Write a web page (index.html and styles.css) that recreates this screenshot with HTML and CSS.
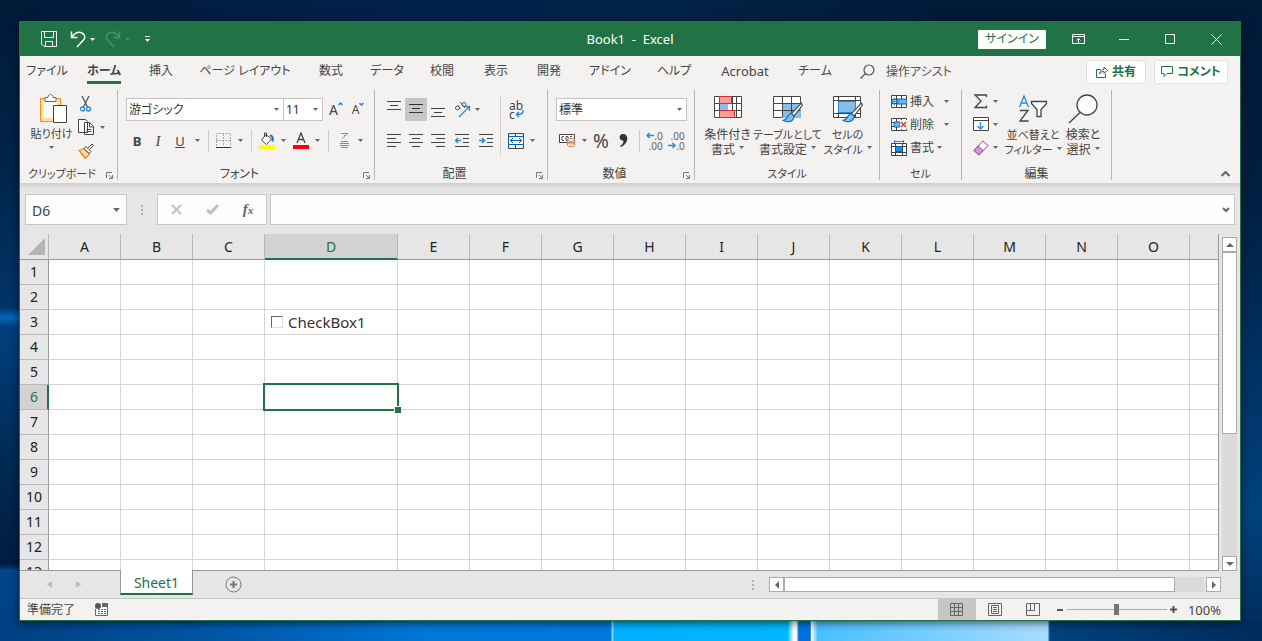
FILE: index.html
```html
<!DOCTYPE html>
<html lang="ja">
<head>
<meta charset="utf-8">
<title>Book1 - Excel</title>
<link rel="stylesheet" href="styles.css">
</head>
<body>
<svg class="defs" width="0" height="0" aria-hidden="true">
  <symbol id="caret" viewBox="0 0 5 3"><path d="M0 0h5L2.5 3z" fill="currentColor"/></symbol>
  <symbol id="launch" viewBox="0 0 7 7"><path d="M.5 6V.5H6M3 3l3 3M6.500 3v3.500H3" fill="none" stroke="currentColor"/></symbol>
  <symbol id="brush" viewBox="0 0 20 20"><path d="M18.500 1L9 11l2.500 2.500L19.500 3z" fill="#fff" stroke="#444"/><path d="M9 11c-4 0-3 6-8 6.500 4 2.500 10 1.500 10.500-4z" fill="#83beec" stroke="#0063b1"/></symbol>
</svg>
<main class="window">
  <header class="titlebar">
    <div class="quick">
      <button class="bare save" aria-label="保存"><svg width="16" height="16" fill="none" stroke="#fff"><path d="M.5.5h15v15H3L.5 13zM3.500.5v6h9v-6M4.500 15v-4.500h7V15"/></svg></button>
      <button class="bare" aria-label="元に戻す"><svg width="16" height="17" fill="none" stroke="#fff" stroke-width="1.500"><path d="M1.500.500v6h6M2 6C5 2 9 .5 12 2s4 5 1 7.500L7 16"/></svg></button>
      <svg class="caret" width="5" height="3"><use href="#caret"/></svg>
      <button class="bare redo" aria-label="やり直し"><svg width="16" height="17" fill="none" stroke="#4d9069" stroke-width="1.500"><path d="M14.500.500v6h-6M14 6C11 2 7 .5 4 2S0 7 3 9.500L9 16"/></svg></button>
      <svg class="caret dim" width="5" height="3"><use href="#caret"/></svg>
      <button class="bare more" aria-label="カスタマイズ"><svg width="5" height="6" fill="#fff"><path d="M0 0h5v1H0zM0 3h5L2.500 6z"/></svg></button>
    </div>
    <h1 class="title">Book1&nbsp; -&nbsp; Excel</h1>
    <div class="controls">
      <button class="signin">サインイン</button>
      <button class="bare wc" aria-label="リボンの表示"><svg width="13" height="10" fill="none" stroke="#fff"><path d="M.5.5h12v9H.5zM.5 2.500h12M6.500 9V4.500M4.500 6.500l2-2 2 2"/></svg></button>
      <button class="bare wc" aria-label="最小化"><svg width="10" height="10" stroke="#fff"><path d="M0 5.500h10"/></svg></button>
      <button class="bare wc" aria-label="最大化"><svg width="10" height="10" fill="none" stroke="#fff"><path d="M.5.5h9v9h-9z"/></svg></button>
      <button class="bare wc" aria-label="閉じる"><svg width="11" height="11" stroke="#fff"><path d="M.5.5l10 10M10.500.5l-10 10"/></svg></button>
    </div>
  </header>

  <div class="tabrow">
    <nav class="tabs">
      <a href="#">ファイル</a><a href="#" class="current"><span>ホーム</span></a><a href="#">挿入</a><a href="#">ページ レイアウト</a><a href="#">数式</a><a href="#">データ</a><a href="#">校閲</a><a href="#">表示</a><a href="#">開発</a><a href="#">アドイン</a><a href="#">ヘルプ</a><a href="#" class="latin">Acrobat</a><a href="#">チーム</a>
    </nav>
    <button class="bare assist"><svg width="15" height="15" fill="none" stroke="#555" stroke-width="1.200"><circle cx="9" cy="6" r="5"/><path d="M5.500 9.500L.5 14.500"/></svg>操作アシスト</button>
    <button class="pill share"><svg width="12" height="12" fill="none" stroke="#217346"><path d="M5 3.500H.5v8h9V8M3.500 8C4 5 6 3.500 8 3.500V1l3.500 3.500L8 7.500V5.500C6 5.500 4.500 6 3.500 8z"/></svg>共有</button>
    <button class="pill comment"><svg width="12" height="12" fill="none" stroke="#217346"><path d="M.5.5h11v7H6L3 10.500v-3H.5z"/></svg>コメント</button>
  </div>

  <section class="ribbon">
    <div class="group">
      <div class="body clip">
        <button class="bare big">
          <svg width="30" height="31" fill="none"><path d="M2.500 5.500h20v23h-20z" fill="#fbdf9b" stroke="#f28c28"/><path d="M5.500 9h14v16h-14z" fill="#fafafa"/><path d="M7 8.500V4.500h3c0-4 5-4 5 0h3v4z" fill="#fff" stroke="#666"/><path d="M15.500 12.500h13v17h-13z" fill="#fff" stroke="#444"/></svg>
          <span class="kana">貼り付け</span><svg class="caret" width="5" height="3"><use href="#caret"/></svg>
        </button>
        <div class="stack">
          <button class="bare" aria-label="切り取り"><svg width="16" height="17" fill="none"><path d="M4 0l5.500 11M11 0L5.500 11" stroke="#555" stroke-width="1.300"/><circle cx="4.500" cy="13" r="2" stroke="#2b88d8" stroke-width="1.300"/><circle cx="10.500" cy="13" r="2" stroke="#2b88d8" stroke-width="1.300"/></svg></button>
          <button class="bare" aria-label="コピー"><svg width="16" height="17" fill="#fff" stroke="#444"><path d="M.5.5h7l2 2v11h-9zM6.500 3.500h5l4 4v8h-9z"/><path d="M11.500 4v4h4M8.500 10.500h5M8.500 12.500h5" fill="none"/></svg><svg class="caret" width="5" height="3"><use href="#caret"/></svg></button>
          <button class="bare" aria-label="書式のコピー"><svg width="16" height="17" fill="none"><path d="M1 8.500l5-2 5.500 5.500-4 4.500z" fill="#fbdf9b" stroke="#f28c28" stroke-width="1.300"/><path d="M6 6.500l2-2 5 5-2 2z" fill="#fff" stroke="#444"/><path d="M10 6l4-4 1.500 1.500-4 4" fill="#fff" stroke="#444"/><path d="M3 11l4.500 5" stroke="#f28c28" stroke-width="1.500"/></svg></button>
        </div>
      </div>
      <footer class="caption kana">クリップボード<svg class="launch" width="7" height="7"><use href="#launch"/></svg></footer>
    </div>

    <div class="group">
      <div class="body rows">
        <div class="line">
          <div class="combo face"><select aria-label="フォント"><option>游ゴシック</option></select><svg class="caret" width="5" height="3"><use href="#caret"/></svg></div>
          <div class="combo size"><select aria-label="サイズ"><option>11</option></select><svg class="caret" width="5" height="3"><use href="#caret"/></svg></div>
          <button class="bare grow" aria-label="拡大">A<svg width="5" height="4" fill="none" stroke="#2b88d8" stroke-width="1.500"><path d="M.5 3l2-2 2 2"/></svg></button>
          <button class="bare grow" aria-label="縮小"><small>A</small><svg width="5" height="4" fill="none" stroke="#2b88d8" stroke-width="1.500"><path d="M.5 1l2 2 2-2"/></svg></button>
        </div>
        <div class="fontgrid">
          <button class="bare"><b>B</b></button><button class="bare"><i>I</i></button><button class="bare"><u>U</u></button><svg class="caret" width="5" height="3"><use href="#caret"/></svg><span class="sep"></span>
          <button class="bare" aria-label="罫線"><svg width="15" height="16" fill="none"><path d="M.5 13V.5h14V13M7.500 1v12M0 7.500h15" stroke="#aaa" stroke-dasharray="2 1"/><path d="M0 14.500h15" stroke="#333"/></svg></button><svg class="caret" width="5" height="3"><use href="#caret"/></svg><span class="sep"></span>
          <button class="bare" aria-label="塗りつぶし"><svg width="16" height="17" fill="none"><path d="M7 2.500L2.500 8l5 4.500L12.500 7zM5.500 5V1h2v4" fill="#fff" stroke="#444"/><path d="M11 3.500c2 0 3.500 2 2.500 6" stroke="#1e73b8" stroke-width="2"/><path d="M0 13h16v4H0z" fill="#ff0"/></svg></button><svg class="caret" width="5" height="3"><use href="#caret"/></svg>
          <button class="bare" aria-label="フォントの色"><svg width="16" height="17" fill="none"><path d="M4 11L8 1l4 10M5.500 7.500h5" stroke="#444" stroke-width="1.300"/><path d="M0 13h16v4H0z" fill="red"/></svg></button><svg class="caret" width="5" height="3"><use href="#caret"/></svg><span class="sep"></span>
          <button class="bare" aria-label="ふりがな"><svg width="9" height="17" fill="none" stroke="#888"><path d="M1 1.500h6.500L5.500 4M4.500 3c0 2-1 3-2.500 4M1 9.500h7M0 11.500h9M0 13.500h9M1 15.500h7"/></svg></button><svg class="caret" width="5" height="3"><use href="#caret"/></svg>
        </div>
      </div>
      <footer class="caption">フォント<svg class="launch" width="7" height="7"><use href="#launch"/></svg></footer>
    </div>

    <div class="group">
      <div class="body align">
        <div class="rows">
          <div class="line">
            <button class="bare sq" aria-label="上揃え"><svg width="14" height="17" stroke="#444"><path d="M0 .5h14M3 4.500h8M0 8.500h14"/></svg></button>
            <button class="bare sq on" aria-label="中央揃え"><svg width="14" height="17" stroke="#333"><path d="M0 3.500h14M3 7.500h8M0 11.500h14"/></svg></button>
            <button class="bare sq" aria-label="下揃え"><svg width="14" height="17" stroke="#444"><path d="M0 7.500h14M3 11.500h8M0 15.500h14"/></svg></button>
            <button class="bare sq wide" aria-label="方向"><svg width="17" height="17" fill="none"><circle cx="3.500" cy="7" r="2" stroke="#555"/><path d="M3.500 4l3 4M6 1l5 6" stroke="#555"/><circle cx="10" cy="3.500" r="2" stroke="#555"/><path d="M5 16L15.500 5.500M11 5.500h4.500V10" stroke="#2b88d8" stroke-width="1.300"/></svg></button>
            <svg class="caret" width="5" height="3"><use href="#caret"/></svg>
          </div>
          <div class="line">
            <button class="bare sq" aria-label="左揃え"><svg width="14" height="13" stroke="#444"><path d="M0 .5h14M0 4.500h9M0 8.500h14M0 12.500h9"/></svg></button>
            <button class="bare sq" aria-label="中央"><svg width="14" height="13" stroke="#444"><path d="M0 .5h14M3 4.500h8M0 8.500h14M3 12.500h8"/></svg></button>
            <button class="bare sq" aria-label="右揃え"><svg width="14" height="13" stroke="#444"><path d="M0 .5h14M5 4.500h9M0 8.500h14M5 12.500h9"/></svg></button>
            <button class="bare sq wide" aria-label="インデント減"><svg width="14" height="13" fill="none" stroke="#444"><path d="M0 .5h14M8 4.500h6M8 8.500h6M0 12.500h14"/><path d="M6 6.500H1M3 4L.5 6.500 3 9" stroke="#2b88d8" stroke-width="1.500"/></svg></button>
            <button class="bare sq" aria-label="インデント増"><svg width="14" height="13" fill="none" stroke="#444"><path d="M0 .5h14M8 4.500h6M8 8.500h6M0 12.500h14"/><path d="M0 6.500h5M3 4l2.500 2.500L3 9" stroke="#2b88d8" stroke-width="1.500"/></svg></button>
          </div>
        </div>
        <span class="sep tall"></span>
        <div class="rows">
          <div class="line">
            <button class="bare wrap" aria-label="折り返し"><span>ab</span><span>c<svg width="9" height="8" fill="none" stroke="#2b88d8" stroke-width="1.500"><path d="M8 0c.5 3-1 4.500-6.500 4.500M4 2L1.500 4.500 4 7"/></svg></span></button>
          </div>
          <div class="line">
            <button class="bare sq" aria-label="結合"><svg width="16" height="16" fill="none"><path d="M.5.5h15v15H.5zM7.500 0v3M7.500 12v4" stroke="#444"/><path d="M.5 3.500h15v8H.5z" fill="#fff" stroke="#0063b1"/><path d="M2.500 7.500h11M5 5L2.500 7.500 5 10M11 5l2.500 2.500L11 10" stroke="#0063b1"/></svg></button>
            <svg class="caret gap" width="5" height="3"><use href="#caret"/></svg>
          </div>
        </div>
      </div>
      <footer class="caption">配置<svg class="launch" width="7" height="7"><use href="#launch"/></svg></footer>
    </div>

    <div class="group">
      <div class="body rows">
        <div class="line"><div class="combo num"><select aria-label="表示形式"><option>標準</option></select><svg class="caret" width="5" height="3"><use href="#caret"/></svg></div></div>
        <div class="numgrid">
          <button class="bare" aria-label="通貨"><svg width="17" height="15" fill="none"><path d="M.5 1.500h15v8H.5z" fill="#fff" stroke="#444"/><path d="M5 3.500H3v4h2M7 3.500h2v4H7zM11 3.500h2" stroke="#555"/><path d="M8.500 7c0-2 7-2 7 0v5c0 2-7 2-7 0zM8.500 7c0 2 7 2 7 0M8.500 9.500c0 2 7 2 7 0" fill="#fff" stroke="#e8792b"/></svg></button><svg class="caret" width="5" height="3"><use href="#caret"/></svg>
          <button class="bare pct">%</button><button class="bare" aria-label="桁区切り"><svg width="9" height="15"><path d="M4 1c6 0 6 9-2 13l-1-1c3-2 4-4 3-5.500C-.5 7.500-.5 1 4 1z" fill="#333"/></svg></button><span class="sep"></span>
          <button class="bare dec" aria-label="小数点以下を増やす"><span><svg width="8" height="7" fill="none" stroke="#2b88d8" stroke-width="1.500"><path d="M8 3.500H1M3.500 1L1 3.500 3.500 6"/></svg>.0</span><span>.00</span></button>
          <button class="bare dec" aria-label="小数点以下を減らす"><span>.00</span><span><svg width="8" height="7" fill="none" stroke="#2b88d8" stroke-width="1.500"><path d="M0 3.500h7M4.500 1L7 3.500 4.500 6"/></svg>.0</span></button>
        </div>
      </div>
      <footer class="caption">数値<svg class="launch" width="7" height="7"><use href="#launch"/></svg></footer>
    </div>

    <div class="group">
      <div class="body styles">
        <button class="bare big"><svg width="30" height="29" fill="#fff" stroke="#444"><path d="M1.500 2.500h27v21h-27zM1.500 9.500h27M1.500 16.500h27M6.500 2v21M19.500 2v21M23.500 2v21"/><path d="M6.500 2.500h12v7h-12zM6.500 16.500h15v7h-15z" fill="#ff9a9a" stroke="#d92c2c"/><path d="M7 10h8v6H7z" fill="#83beec" stroke="none"/></svg><span>条件付き</span><span>書式<svg class="caret" width="5" height="3"><use href="#caret"/></svg></span></button>
        <button class="bare big"><svg width="32" height="29" fill="#fff" stroke="#444"><path d="M1.500 2.500h27v21h-27z"/><path d="M10 9h19v15H10z" fill="#83beec" stroke="none"/><path d="M1.500 9.500h27M1.500 16.500h27M10.500 2v21M19.500 2v21" fill="none"/><svg x="10" y="8" width="21" height="21" viewBox="0 0 20 20"><use href="#brush"/></svg></svg><span class="kana">テーブルとして</span><span>書式設定<svg class="caret" width="5" height="3"><use href="#caret"/></svg></span></button>
        <button class="bare big"><svg width="32" height="29" fill="#fff" stroke="#444"><path d="M1.500 2.500h27v21h-27zM1.500 6.500h27M1.500 19.500h27M6.500 2v21M23.500 2v21"/><path d="M6.500 7.500h17v11h-17z" fill="#83beec" stroke="#2b88d8"/><svg x="10" y="8" width="21" height="21" viewBox="0 0 20 20"><use href="#brush"/></svg></svg><span class="kana">セルの</span><span class="kana">スタイル<svg class="caret" width="5" height="3"><use href="#caret"/></svg></span></button>
      </div>
      <footer class="caption plain kana">スタイル</footer>
    </div>

    <div class="group">
      <div class="body cells">
        <button class="bare"><svg width="16" height="16" fill="#fff" stroke="#444"><path d="M.5 1.500h15v12H.5zM.5 5.500h15M.5 9.500h15M5.500 1v12M10.500 1v12"/><path d="M6 5h10v5H6z" fill="#6db3f2" stroke="#0063b1"/><path d="M8 7.500H1M4 4L.5 7.500 4 11" fill="none" stroke="#2b88d8" stroke-width="1.500"/></svg>挿入<svg class="caret" width="5" height="3"><use href="#caret"/></svg></button>
        <button class="bare"><svg width="16" height="16" fill="#fff" stroke="#444"><path d="M.5 1.500h15v12H.5zM.5 5.500h15M.5 9.500h15M5.500 1v12M10.500 1v12"/><path d="M3 5h6v5H3z" fill="#6db3f2" stroke="#0063b1"/><path d="M9 3h7v9H9z" fill="#f3f2f1" stroke="none"/><path d="M10 5l5 5M15 5l-5 5" stroke="#e03c31" stroke-width="1.500"/></svg>削除<svg class="caret" width="5" height="3"><use href="#caret"/></svg></button>
        <button class="bare fmt"><svg width="16" height="16" fill="#fff" stroke="#444"><path d="M.5 3.500h15v12H.5zM.5 6.500h15M.5 12.500h15M4.500 3v12M11.500 3v12"/><path d="M4.500 6.500h7v5h-7z" fill="#2b88d8" stroke="#0063b1"/><path d="M3.500 0v3M12.500 0v3M4 1.500h8" stroke="#2b88d8"/></svg>書式<svg class="caret" width="5" height="3"><use href="#caret"/></svg></button>
      </div>
      <footer class="caption plain kana">セル</footer>
    </div>

    <div class="group">
      <div class="body edit">
        <div class="stack">
          <button class="bare" aria-label="合計"><svg width="16" height="15" fill="none" stroke="#444" stroke-width="1.300"><path d="M13.500 3V1H2l6 6-6 6.500h11.500v-2"/></svg><svg class="caret" width="5" height="3"><use href="#caret"/></svg></button>
          <button class="bare" aria-label="フィル"><svg width="16" height="15" fill="#fff" stroke="#444"><path d="M.5.5h15v13H.5zM.5 3.500h15"/><path d="M7.500 5v7M4.500 9l3 3 3-3" fill="none" stroke="#2b88d8" stroke-width="1.300"/></svg><svg class="caret" width="5" height="3"><use href="#caret"/></svg></button>
          <button class="bare" aria-label="クリア"><svg width="16" height="16" stroke="#a03fa5"><path d="M1 10.500L10 1l5 4.500-9 9.500z" fill="#fff"/><path d="M1 10.500L5 6l5 4.500L6 15z" fill="#cf9bd3"/></svg><svg class="caret" width="5" height="3"><use href="#caret"/></svg></button>
        </div>
        <button class="bare big"><svg width="30" height="31" fill="none"><path d="M1.500 14L6 3l4.500 11M3 10h6" stroke="#2b88d8" stroke-width="1.300"/><path d="M2 17.500h8L2 28h8.500" stroke="#444" stroke-width="1.300"/><path d="M13.500 8.500h15v2l-5.500 6v7h-4v-7l-5.500-6z" fill="#fff" stroke="#444" stroke-width="1.300"/></svg><span class="kana">並べ替えと</span><span class="kana">フィルター<svg class="caret" width="5" height="3"><use href="#caret"/></svg></span></button>
        <button class="bare big"><svg width="30" height="31" fill="#fff" stroke="#444" stroke-width="1.300"><circle cx="19" cy="12" r="10"/><path d="M12 19.500L1 30"/></svg><span>検索と</span><span>選択<svg class="caret" width="5" height="3"><use href="#caret"/></svg></span></button>
      </div>
      <footer class="caption plain">編集</footer>
    </div>
    <button class="bare collapse" aria-label="リボンを折りたたむ"><svg width="9" height="6" fill="none" stroke="#666" stroke-width="2"><path d="M.5 5l4-4 4 4"/></svg></button>
  </section>

  <section class="formula">
    <div class="namebox"><input aria-label="名前ボックス" value="D6"><svg class="caret" width="7" height="4"><use href="#caret"/></svg></div>
    <span class="dots"></span>
    <div class="fx">
      <button class="bare" aria-label="キャンセル"><svg width="11" height="11" stroke="#c0c0c0" stroke-width="2"><path d="M1 1l9 9M10 1l-9 9"/></svg></button>
      <button class="bare" aria-label="入力"><svg width="13" height="11" fill="none" stroke="#c0c0c0" stroke-width="3"><path d="M1 6l3.500 3L12 1"/></svg></button>
      <button class="bare fn">f<small>x</small></button>
    </div>
    <div class="entry"><input aria-label="数式バー"><svg width="8" height="6" fill="none" stroke="#666" stroke-width="2"><path d="M1 1l3 3 3-3"/></svg></div>
  </section>

  <section class="sheet">
    <div class="viewport"><table class="cellgrid" id="cells"></table></div>
    <div class="vscroll">
      <button class="bare arrow" aria-label="上へ"><svg width="8" height="4" fill="#666"><path d="M0 4h8L4 0z"/></svg></button>
      <div class="track"><div class="thumb"></div></div>
      <button class="bare arrow" aria-label="下へ"><svg width="8" height="4" fill="#666"><path d="M0 0h8L4 4z"/></svg></button>
    </div>
  </section>

  <section class="sheetbar">
    <div class="nav">
      <button class="bare" aria-label="前"><svg width="5" height="7" fill="#bbb"><path d="M5 0v7L0 3.500z"/></svg></button>
      <button class="bare" aria-label="次"><svg width="5" height="7" fill="#bbb"><path d="M0 0v7l5-3.500z"/></svg></button>
    </div>
    <a href="#" class="sheettab">Sheet1</a>
    <button class="bare add" aria-label="新しいシート"><svg width="17" height="17" fill="none" stroke="#777"><circle cx="8.500" cy="8.500" r="7.500"/><path d="M8.500 5v7M5 8.500h7" stroke-width="2"/></svg></button>
    <span class="dots"></span>
    <div class="hscroll">
      <button class="bare arrow" aria-label="左へ"><svg width="4" height="8" fill="#666"><path d="M4 0v8L0 4z"/></svg></button>
      <div class="track"><div class="thumb"></div></div>
      <button class="bare arrow" aria-label="右へ"><svg width="4" height="8" fill="#666"><path d="M0 0v8l4-4z"/></svg></button>
    </div>
  </section>

  <footer class="status">
    <span class="ready">準備完了</span>
    <svg width="13" height="13"><path d="M.5 6v6.500h12v-12H7" fill="#fff" stroke="#666"/><path d="M7 0h6v4H7z" fill="#666"/><circle cx="3" cy="3" r="3" fill="#555"/><path d="M3 6.500h8M3 8.500h8M3 10.500h8" stroke="#666" stroke-dasharray="2 1"/></svg>
    <div class="views">
      <button class="bare on" aria-label="標準"><svg width="13" height="13" fill="none" stroke="#666"><path d="M.5.5h12v12H.5zM.5 4.500h12M.5 8.500h12M4.500 0v13M8.500 0v13"/></svg></button>
      <button class="bare" aria-label="ページ レイアウト表示"><svg width="14" height="13" fill="none" stroke="#666"><path d="M.5.5h13v12H.5zM3.500 2.500h7v8h-7zM5 4.500h4M5 6.500h4M5 8.500h4"/></svg></button>
      <button class="bare" aria-label="改ページ"><svg width="14" height="13" fill="none" stroke="#666"><path d="M.5.5h13v12H.5zM.5 7.500h8V.5M4.500.5v7"/></svg></button>
    </div>
    <button class="bare zoom" aria-label="縮小"><svg width="6" height="2" fill="#555"><path d="M0 0h6v2H0z"/></svg></button>
    <input type="range" class="slider" aria-label="ズーム" min="0" max="200" value="100">
    <button class="bare zoom" aria-label="拡大"><svg width="7" height="7" fill="#555"><path d="M0 2.500h7v2H0zM2.500 0h2v7h-2z"/></svg></button>
    <span class="percent">100%</span>
  </footer>
</main>
<script src="sheet.js"></script>
</body>
</html>
```
FILE: sheet.js
```js
const columns = 'ABCDEFGHIJKLMNO'.split('').concat('');
const rowCount = 13;
const table = document.getElementById('cells');

const colgroup = document.createElement('colgroup');
colgroup.innerHTML = '<col class="c-head">' +
  columns.map(c => `<col class="${c === 'D' ? 'c-wide' : 'c-std'}">`).join('');
table.append(colgroup);

const head = table.createTHead().insertRow();
head.innerHTML = '<th class="corner"><svg width="17" height="17" fill="#b4b4b4"><path d="M17 0v17H0z"/></svg></th>' +
  columns.map(c => `<th class="${c === 'D' ? 'picked' : ''}">${c}</th>`).join('');

const body = table.createTBody();
for (let r = 1; r <= rowCount; r++) {
  const row = body.insertRow();
  row.innerHTML = `<th class="${r === 6 ? 'picked' : ''}">${r}</th>` + columns.map(() => '<td></td>').join('');
}
body.rows[2].cells[4].innerHTML = '<label class="check"><input type="checkbox">CheckBox1</label>';
const active = body.rows[5].cells[4];
active.className = 'active';
active.innerHTML = '<div class="cursor"></div>';
```
FILE: styles.css
```css
* { box-sizing: border-box; }
body {
  margin: 0;
  height: 100vh;
  padding: 21px 21px 20px 19px;
  overflow: hidden;
  font: 12px/16px "Noto Sans", "Noto Sans CJK JP", sans-serif;
  font-feature-settings: "palt";
  color: #444;
  background:
    linear-gradient(90deg, #003f80, #0058a8 18%, #0078d8 34%, #0078dc 48.4%, #8df 48.5%, #00b0ff 48.700%, #00b8ff 62.4%, #fff 62.9%, #fff 63.1%, #0070e0 63.3%, #0070e0 64.2%, #fff 64.3%, #48c0ff 64.800%, #a8dcff 83%, #00427e 83.2%, #002b5a) bottom / 100% 22px no-repeat,
    linear-gradient(#001a38, #002448 25%, #003468 48%, #0068b8 49.500%, #004080 51%, #002c58 70%, #001c40 88%, #00468c 89%, #003f80) left / 24px 100% no-repeat,
    linear-gradient(#001a38, #001e40 30%, #003060 55%, #00427e 80%, #002b5a) right / 24px 100% no-repeat,
    linear-gradient(90deg, #001a38, #00214a 32%, #002448 50%, #001a38 75%);
}
svg { display: block; flex: none; }
.defs { position: absolute; }
.window {
  display: flex;
  flex-direction: column;
  height: 100%;
  border: 1px solid #217346;
  background: #e6e6e6;
  box-shadow: 0 2px 8px rgba(0, 0, 0, .6);
}
.bare {
  display: flex;
  align-items: center;
  justify-content: center;
  border: 0;
  padding: 0;
  background: none;
  color: inherit;
  font: inherit;
  font-feature-settings: inherit;
}
.kana { font-size: 11px; }
.caret { color: #666; }
.sep { justify-self: center; width: 1px; height: 22px; background: #d0cecc; }

.titlebar {
  display: grid;
  grid-template-columns: 1fr auto 1fr;
  align-items: center;
  height: 34px;
  flex: none;
  background: #217346;
  color: #fff;
}
.quick { display: flex; align-items: center; padding-left: 21px; }
.quick .caret { color: #fff; margin-left: 4px; }
.quick .caret.dim { color: #4d9069; }
.save { margin-right: 13px; }
.redo { margin-left: 10px; }
.more { margin-left: 15px; }
.title { margin: 0; font-size: 13px; font-weight: 400; }
.controls { display: flex; align-items: center; justify-content: flex-end; padding-right: 1px; }
.wc { width: 46px; height: 34px; }
.signin { width: 68px; height: 19px; padding: 0; margin-right: 9px; border: 0; border-radius: 1px; background: #fff; color: #217346; font: inherit; font-feature-settings: inherit; }

.tabrow { display: flex; align-items: center; height: 31px; flex: none; padding-right: 12px; background: #f3f2f1; }
.tabs { display: grid; align-self: flex-start; padding-top: 5px; grid-template-columns: 54px 60px 54px 114px 58px 54px 56px 52px 54px 68px 60px 82px 58px; }
.tabs a { color: #444; text-decoration: none; text-align: center; line-height: 20px; white-space: nowrap; }
.tabs .current { font-weight: 700; }
.tabs .latin { font-size: 13px; }
.current span { display: inline-block; border-bottom: 3px solid #217346; }
.assist { gap: 11px; margin: 0 auto 0 16px; color: #555; }
.pill { display: flex; align-items: center; justify-content: center; gap: 4px; height: 24px; padding: 0; border: 1px solid #e1dfdd; border-radius: 2px; background: #fff; color: #217346; font: inherit; font-weight: 700; font-feature-settings: inherit; white-space: nowrap; }
.share { width: 60px; margin-right: 8px; }
.comment { width: 74px; }

.ribbon {
  display: grid;
  grid-template-columns: 98px 257px 173px 147px 185px 82px 150px 1fr;
  height: 96px;
  flex: none;
  padding: 3px 0 4px;
  background: #f3f2f1;
}
.group { display: flex; flex-direction: column; border-right: 1px solid #b8b6b4; min-width: 0; }
.body { height: 76px; }
.caption { display: grid; grid-template-columns: 1fr 11px; justify-items: center; align-items: end; height: 14px; padding-right: 2px; white-space: nowrap; line-height: 12px; }
.caption.plain { grid-template-columns: 1fr; padding: 0; }
.launch { color: #777; margin-bottom: 1px; }
.big { flex-direction: column; justify-content: flex-start; line-height: 15px; white-space: nowrap; }
.big span { display: flex; align-items: center; gap: 4px; }
.clip { display: flex; padding: 3px 0 0 7px; }
.clip .big { width: 49px; }
.clip .big svg:first-child { margin: 0 0 2px 2px; }
.clip .big .caret { margin-top: 5px; }
.clip .stack { padding-left: 2px; }
.stack .bare { justify-content: flex-start; gap: 6px; height: 23px; }
.rows { display: flex; flex-direction: column; gap: 8px; padding-top: 8px; }
.body.rows { padding-left: 8px; }
.line { display: flex; align-items: center; height: 23px; }
.combo { position: relative; height: 23px; }
.combo select { appearance: none; width: 100%; height: 100%; padding: 0 2px; border: 1px solid #c6c4c2; border-radius: 0; background: #fff; color: #333; font: inherit; font-feature-settings: inherit; }
.combo .caret { position: absolute; right: 5px; top: 10px; pointer-events: none; }
.face { width: 158px; }
.size { width: 40px; margin-left: -1px; }
.num { width: 131px; }
.grow { align-items: flex-start; width: 22px; padding-left: 4px; font-size: 14px; }
.grow small { font-size: 12px; }
.fontgrid { display: grid; grid-template-columns: 22px 20px 24px 11px 10px 21px 12px 10px 22px 11px 24px 9px 12px 20px 12px; align-items: center; justify-items: center; height: 23px; font-size: 13px; }
.fontgrid i { font-family: "Liberation Serif", serif; font-size: 15px; }
.numgrid { display: grid; grid-template-columns: 22px 12px 22px 22px 10px 21px 23px; align-items: center; justify-items: center; height: 23px; }
.pct { font-size: 19px; }
.dec { flex-direction: column; align-items: flex-end; font-size: 10px; line-height: 10px; color: #666; }
.dec span { display: flex; align-items: center; }
.align { display: flex; padding-left: 8px; }
.align .bare { flex: none; }
.sq { width: 22px; height: 23px; }
.wide { width: 26px; }
.on { background: #c8c6c4; }
.sep.tall { height: 59px; margin: 6px 4px 0 3px; }
.align .rows:first-child { width: 114px; }
.wrap { flex-direction: column; align-items: flex-start; padding-left: 4px; line-height: 9px; }
.wrap span { display: flex; }
.gap { margin-left: 3px; }
.styles { display: grid; grid-template-columns: 53px 67px 53px; padding: 4px 0 0 6px; }
.styles .big svg:first-child { margin-bottom: 4px; }
.cells { padding-left: 11px; }
.cells .bare { height: 23px; gap: 3px; }
.cells .caret { margin-left: 7px; }
.cells .fmt .caret { margin-left: 0; }
.edit { display: grid; grid-template-columns: 33px 54px 46px; padding-left: 11px; }
.edit .big { padding-top: 3px; }
.edit .big svg:first-child { margin-bottom: 3px; }
.edit .stack .bare { gap: 4px; }
.collapse { align-self: end; justify-self: end; width: 30px; height: 13px; }

.formula { display: grid; grid-template-columns: 102px 30px 110px 1fr; height: 51px; flex: none; padding: 11px 5px 9px; background: linear-gradient(#cfcfcf, #e6e6e6 6px); }
.namebox, .fx, .entry { display: flex; align-items: center; border: 1px solid #c6c6c6; background: #fdfdfd; }
.namebox { padding-right: 6px; }
.namebox input { flex: 1; min-width: 0; }
.namebox input, .entry input { height: 100%; border: 0; padding: 2px 0 0 6px; background: none; color: #444; font: 14px/20px "Noto Sans", sans-serif; }
.entry { margin-left: 3px; padding-right: 4px; }
.entry input { flex: 1; }
.dots { align-self: center; justify-self: center; width: 2px; height: 10px; background: repeating-linear-gradient(#b0b0b0 0 2px, transparent 2px 4px); }
.fx .bare { flex: 1; height: 100%; }
.fn { font: italic 700 15px "Liberation Serif", serif; color: #666; }
.fn small { font-size: 11px; }

.sheet { display: flex; flex: 1; min-height: 0; }
.viewport { flex: 1; min-width: 0; overflow: hidden; border-right: 1px solid #999; border-bottom: 1px solid #999; }
.cellgrid { table-layout: fixed; width: 1242px; border-collapse: separate; border-spacing: 0; background: #fff; font-size: 14px; line-height: 20px; }
.c-head { width: 29px; }
.c-std { width: 72px; }
.c-wide { width: 133px; }
.cellgrid th { padding: 0; background: #e6e6e6; color: #222; font-weight: 400; }
.cellgrid thead th { height: 26px; border-right: 1px solid #b8b8b8; border-bottom: 1px solid #999; }
.cellgrid tbody th { height: 25px; border-right: 1px solid #999; border-bottom: 1px solid #b8b8b8; }
.cellgrid thead .picked { padding-top: 1px; background: #d2d2d2; border-bottom: 2px solid #217346; color: #217346; }
.cellgrid tbody .picked { padding-left: 1px; background: #d2d2d2; border-right: 2px solid #217346; color: #217346; }
.corner svg { margin-left: 8px; }
.cellgrid td { height: 25px; padding: 0; border-right: 1px solid #d4d4d4; border-bottom: 1px solid #d4d4d4; }
.check { display: flex; align-items: center; gap: 5px; height: 24px; padding-left: 6px; color: #333; font-size: 15px; }
.check input { appearance: none; width: 12px; height: 12px; margin: 0; border: 1px solid #ddd; border-top-color: #666; border-left-color: #666; background: #fff; }
.active { position: relative; }
.cursor { position: absolute; inset: -2px; border: 2px solid #217346; }
.cursor::after { content: ""; position: absolute; right: -4px; bottom: -4px; width: 6px; height: 6px; border: 1px solid #fff; border-right: 0; border-bottom: 0; background: #217346; }
.arrow { width: 15px; height: 15px; flex: none; border: 1px solid #ababab; background: #fff; }
.track { flex: 1; background: #dadada; }
.thumb { border: 1px solid #ababab; background: #fff; }
.vscroll { display: flex; flex-direction: column; width: 15px; margin: 3px 3px 0; }
.vscroll .thumb { height: 60%; }

.sheetbar { display: flex; align-items: center; height: 27px; flex: none; padding-right: 19px; }
.nav { display: flex; width: 100px; padding-left: 27px; gap: 24px; }
.sheettab { align-self: flex-start; width: 73px; height: 25px; margin-top: -1px; border: 1px solid #999; border-top: 0; border-bottom: 2px solid #217346; background: #fff; color: #217346; text-align: center; text-decoration: none; font-size: 14px; line-height: 26px; }
.add { margin: 0 auto 0 32px; }
.sheetbar .dots { margin-right: 15px; }
.hscroll { display: flex; width: 452px; }
.hscroll .track { display: flex; margin-right: 2px; }
.hscroll .thumb { width: 93%; }

.status { display: flex; align-items: center; height: 22px; flex: none; padding: 0 19px 0 7px; border-top: 1px solid #c6c6c6; background: #f3f2f1; }
.ready { margin-right: 20px; }
.views { display: flex; margin-left: auto; margin-right: 5px; }
.views .bare { width: 38px; height: 21px; }
.slider { appearance: none; width: 100px; height: 12px; margin: 0 3px 0 4px; background: linear-gradient(#aaa, #aaa) center / 100% 1px no-repeat; }
.slider::-webkit-slider-thumb { appearance: none; width: 5px; height: 11px; background: #737373; }
.percent { margin-left: 11px; font-size: 13px; }
```
